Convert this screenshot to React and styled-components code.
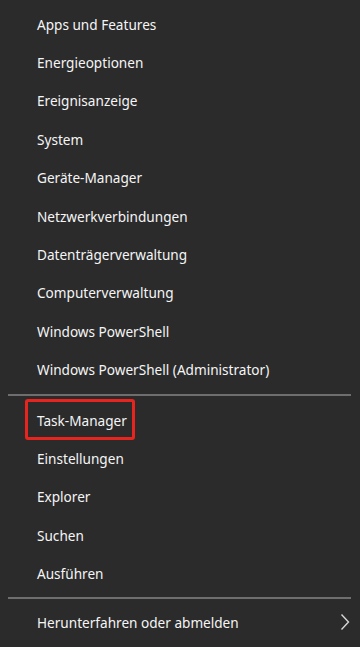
import React from "react";
import styled, { createGlobalStyle } from "styled-components";

const Global = createGlobalStyle`
  html, body { margin: 0; padding: 0; background: #2b2b2b; }
  body { font-family: "Noto Sans", "Open Sans", sans-serif; }
`;

const Menu = styled.nav`
  width: 360px;
  height: 647px;
  background: #2b2b2b;
  padding-top: 5px;
  box-sizing: border-box;
  display: flex;
  flex-direction: column;
`;

const Item = styled.div`
  position: relative;
  height: 38.4px;
  display: flex;
  align-items: center;
  justify-content: space-between;
  padding: 0 10px 0 37px;
  color: #f5f5f5;
  font-size: 13.6px;
  ${(p) =>
    p.$marked &&
    `
    &::after {
      content: "";
      position: absolute;
      left: 25px;
      top: -2px;
      width: 110px;
      height: 41px;
      box-sizing: border-box;
      border: 3px solid #e8241f;
      border-radius: 3px;
    }
  `}
`;

const Separator = styled.hr`
  border: none;
  height: 2px;
  background: #6e6e6e;
  margin: ${(p) => p.$margin};
  margin-left: 8px;
  margin-right: 9px;
`;

const Chevron = () => (
  <svg width="10" height="18" viewBox="0 0 10 18" fill="none">
    <path d="M1.5 1.5 L8.5 9 L1.5 16.5" stroke="#d6d6d6" strokeWidth="1.4" />
  </svg>
);

const group1 = [
  "Apps und Features",
  "Energieoptionen",
  "Ereignisanzeige",
  "System",
  "Geräte-Manager",
  "Netzwerkverbindungen",
  "Datenträgerverwaltung",
  "Computerverwaltung",
  "Windows PowerShell",
  "Windows PowerShell (Administrator)",
];
const group2 = ["Task-Manager", "Einstellungen", "Explorer", "Suchen", "Ausführen"];

export default function App() {
  return (
    <>
      <Global />
      <Menu>
        {group1.map((t) => (
          <Item key={t}>{t}</Item>
        ))}
        <Separator $margin="5px 0 5px" />
        {group2.map((t) => (
          <Item key={t} $marked={t === "Task-Manager"}>
            {t}
          </Item>
        ))}
        <Separator $margin="4px 0 4px" />
        <Item>
          <span>Herunterfahren oder abmelden</span>
          <Chevron />
        </Item>
      </Menu>
    </>
  );
}
